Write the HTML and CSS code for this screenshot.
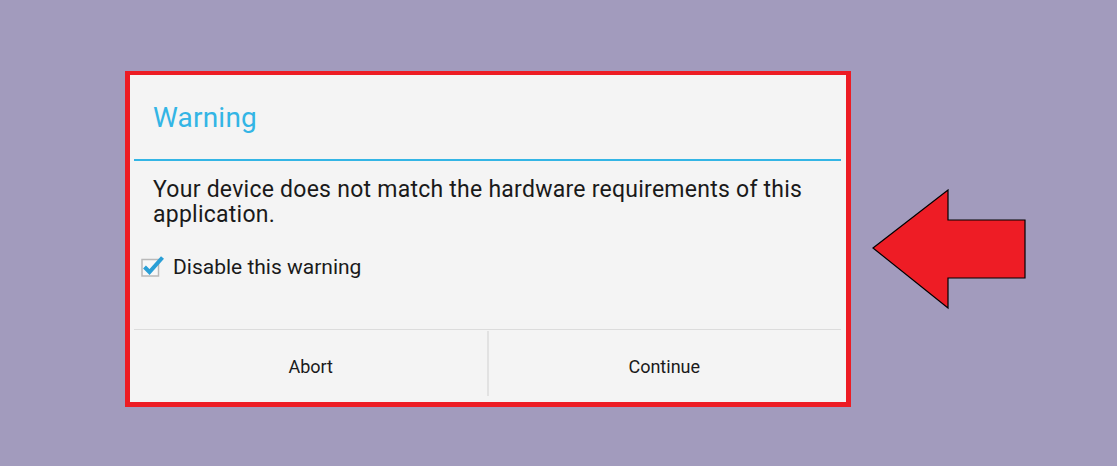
FILE: index.html
```html
<!DOCTYPE html>
<html lang="en">
<head>
    <meta charset="UTF-8">
    <title>Warning dialog</title>
    <link rel="stylesheet" href="styles.css">
</head>
<body>
    <div class="highlight">
        <div class="dialog">
            <div class="dialog-title">Warning</div>
            <div class="dialog-body">
                <p class="message">Your device does not match the hardware requirements of this application.</p>
                <label class="check-row">
                    <svg class="checkbox" width="26" height="26" viewBox="0 0 26 26">
                        <rect x="3" y="5.5" width="16.5" height="16.5" fill="#f7f7f7" stroke="#b9b9b9" stroke-width="1.5"/>
                        <path d="M5.5 13 L10.5 18 L23.5 3.5" fill="none" stroke="#2a9fd6" stroke-width="4"/>
                    </svg>
                    Disable this warning
                </label>
            </div>
            <div class="dialog-buttons">
                <button class="dialog-button">Abort</button>
                <button class="dialog-button">Continue</button>
            </div>
        </div>
    </div>

    <svg class="arrow" width="156" height="122" viewBox="0 0 156 122">
        <polygon points="1,59 76,1 76,31 153,31 153,89 76,89 76,119" fill="#ee1c25" stroke="#000" stroke-width="1.2"/>
    </svg>
</body>
</html>
```

FILE: styles.css
```css
body {
    margin: 0;
    background-color: #a29bbd;
    font-family: Roboto, 'Noto Sans', sans-serif;
    display: flex;
    align-items: flex-start;
    padding: 71px 0 0 125px;
    height: 466px;
    box-sizing: border-box;
    overflow: hidden;
}
.highlight {
    border: 5px solid #ed1c24;
    border-top-width: 4px;
    background-color: #f4f4f4;
    width: 707px;
    height: 327px;
    padding: 0 5px 0 4px;
}
.dialog {
    display: flex;
    flex-direction: column;
    height: 100%;
}
.dialog-title {
    height: 86px;
    box-sizing: border-box;
    border-bottom: 2px solid #33b5e5;
    padding-left: 19px;
    display: flex;
    align-items: center;
    color: #33b5e5;
    font-size: 28px;
    letter-spacing: 0.2px;
}
.dialog-body {
    flex: 1;
    padding: 16px 19px 0 19px;
    border-bottom: 1px solid #dcdcdc;
}
.message {
    margin: 0;
    font-size: 23px;
    line-height: 25px;
    letter-spacing: 0.25px;
    color: #1a1a1a;
}
.check-row {
    display: flex;
    align-items: center;
    margin: 27px 0 0 -14px;
    font-size: 21px;
    color: #1a1a1a;
    gap: 8px;
}
.dialog-buttons {
    height: 72px;
    display: flex;
}
.dialog-button {
    flex: 1;
    position: relative;
    background: none;
    border: none;
    font-family: inherit;
    font-size: 18px;
    color: #1a1a1a;
    padding: 0;
}
.dialog-button + .dialog-button::before {
    content: "";
    position: absolute;
    left: -1px;
    top: 1px;
    bottom: 6px;
    width: 2px;
    background-color: #e2e2e2;
}
.arrow {
    margin: 118px 0 0 21px;
}
```
